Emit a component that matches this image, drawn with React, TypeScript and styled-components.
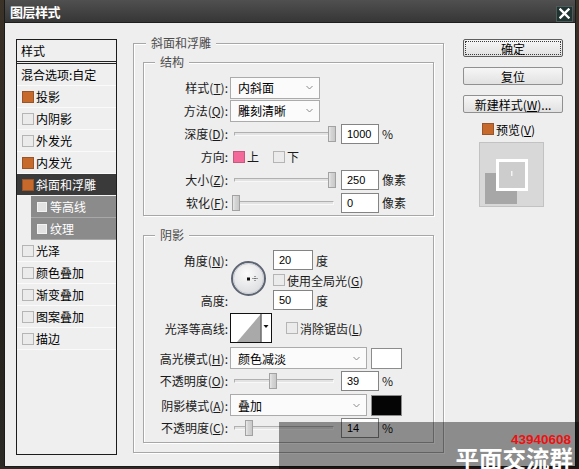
import React from "react";
import styled, { createGlobalStyle } from "styled-components";

const GlobalStyle = createGlobalStyle`
  html, body {
    margin: 0;
    padding: 0;
  }
  body {
    background: #2a2520;
    font-family: "Noto Sans CJK SC", "Liberation Sans", sans-serif;
    font-size: 12px;
    color: #111;
  }
`;

type CheckKind = "off" | "on" | "pink" | "sub";

const checkColors: Record<CheckKind, [string, string]> = {
  off: ["#b5b5b5", "#ebebeb"],
  on: ["#98552b", "#c8692c"],
  pink: ["#c8587f", "#f2699a"],
  sub: ["#f2f2f2", "#e2e2e2"],
};

const listItems = [
  { text: "投影", on: true },
  { text: "内阴影" },
  { text: "外发光" },
  { text: "内发光", on: true },
  { text: "斜面和浮雕", on: true, active: true },
  { text: "等高线", sub: true },
  { text: "纹理", sub: true },
  { text: "光泽" },
  { text: "颜色叠加" },
  { text: "渐变叠加" },
  { text: "图案叠加" },
  { text: "描边" },
];

const Chevron = () => (
  <svg width="7" height="5" viewBox="0 0 7 5">
    <path d="M0.5 1 L3.5 4 L6.5 1" fill="none" stroke="#8a8a8a" strokeWidth="1" />
  </svg>
);

const Select = ({ width, value }: { width: number; value: string }) => (
  <SelectBox $w={width}>
    <span>{value}</span>
    <Chevron />
  </SelectBox>
);

const Slider = ({ frac }: { frac: number }) => (
  <SliderWrap>
    <Track />
    <Thumb style={{ left: 2 + Math.round(frac * 96) }} />
  </SliderWrap>
);

const Dial = () => (
  <svg width="37" height="37" viewBox="0 0 37 37">
    <defs>
      <radialGradient id="dialFill" cx="0.45" cy="0.35" r="0.7">
        <stop offset="0" stopColor="#fbfbfb" />
        <stop offset="1" stopColor="#d9dadd" />
      </radialGradient>
    </defs>
    <circle cx="18.5" cy="18.5" r="16.5" fill="url(#dialFill)" stroke="#5d6472" strokeWidth="2" />
    <circle cx="18.5" cy="18.5" r="15" fill="none" stroke="#c9ccd2" strokeWidth="1" />
    <rect x="17" y="17.5" width="3" height="3" fill="#111" />
    <path d="M25 16v5M22.5 18.5h5" stroke="#333" strokeWidth="0.9" strokeDasharray="1 1" />
  </svg>
);

const Contour = () => (
  <svg width="42" height="30" viewBox="0 0 42 30">
    <rect x="0.5" y="0.5" width="41" height="29" fill="#fff" stroke="#111" />
    <polygon points="7,29 30.5,1.5 30.5,29" fill="#a9a9a9" />
    <line x1="31" y1="1" x2="31" y2="29" stroke="#222" />
    <polygon points="33.5,12 38.5,12 36,15" fill="#111" />
  </svg>
);

const Preview = () => (
  <svg width="65" height="65" viewBox="0 0 65 65">
    <rect x="0.5" y="0.5" width="64" height="64" fill="#d8d8d8" stroke="#c2c2c2" />
    <rect x="6" y="31" width="32" height="31" fill="#a7a7a7" />
    <rect x="18.5" y="18.5" width="29" height="29" fill="#cdcdcd" stroke="#ffffff" strokeWidth="3" />
    <rect x="32" y="29" width="1.5" height="5" fill="#f4f4f4" />
  </svg>
);

const CloseIcon = () => (
  <svg width="11" height="11" viewBox="0 0 11 11">
    <path d="M1.5 1.5 L9.5 9.5 M9.5 1.5 L1.5 9.5" stroke="#fff" strokeWidth="2.4" strokeLinecap="square" />
  </svg>
);

export default function App() {
  return (
    <Stage>
      <GlobalStyle />
      <Window>
        <TitleBar>
          <Title>图层样式</Title>
          <CloseButton>
            <CloseIcon />
          </CloseButton>
        </TitleBar>

        <Body>
          <List>
            <ListHeader>样式</ListHeader>
            <ListDivider />
            <BlendRow>混合选项:自定</BlendRow>
            {listItems.map((it) => (
              <Item key={it.text} $active={it.active} $sub={it.sub}>
                <Check $kind={it.sub ? "sub" : it.on ? "on" : "off"} />
                {it.text}
              </Item>
            ))}
          </List>

          <Main>
            <Group $pad={9} $pb={9}>
              <Legend $offset={3}>斜面和浮雕</Legend>

              <Group $pad={0} $pb={1} $mt={11}>
                <Legend $offset={11}>结构</Legend>
                <Row $mt={6}>
                  <Label>样式(<u>T</u>):</Label>
                  <Select width={90} value="内斜面" />
                </Row>
                <Row>
                  <Label>方法(<u>Q</u>):</Label>
                  <Select width={90} value="雕刻清晰" />
                </Row>
                <Row>
                  <Label>深度(<u>D</u>):</Label>
                  <Slider frac={1} />
                  <NumBox>1000</NumBox>
                  <Unit>%</Unit>
                </Row>
                <Row>
                  <Label>方向:</Label>
                  <Check $kind="pink" style={{ marginLeft: 3 }} />
                  <Unit $ml={2}>上</Unit>
                  <Check $kind="off" style={{ marginLeft: 14 }} />
                  <Unit $ml={2}>下</Unit>
                </Row>
                <Row>
                  <Label>大小(<u>Z</u>):</Label>
                  <Slider frac={1} />
                  <NumBox>250</NumBox>
                  <Unit>像素</Unit>
                </Row>
                <Row>
                  <Label>软化(<u>F</u>):</Label>
                  <Slider frac={0} />
                  <NumBox>0</NumBox>
                  <Unit>像素</Unit>
                </Row>
              </Group>

              <Group $pad={0} $pb={3} $mt={19}>
                <Legend $offset={11}>阴影</Legend>
                <AngleGrid>
                  <Label style={{ gridRow: 1, gridColumn: 1 }}>角度(<u>N</u>):</Label>
                  <DialCell>
                    <Dial />
                  </DialCell>
                  <Cell style={{ gridRow: 1 }}>
                    <NumBox $w={40} $ml={0}>20</NumBox>
                    <Unit>度</Unit>
                  </Cell>
                  <Cell style={{ gridRow: 2 }}>
                    <Check $kind="off" />
                    <Unit $ml={2}>使用全局光(<u>G</u>)</Unit>
                  </Cell>
                  <Label style={{ gridRow: 3, gridColumn: 1 }}>高度:</Label>
                  <Cell style={{ gridRow: 3 }}>
                    <NumBox $w={40} $ml={0}>50</NumBox>
                    <Unit>度</Unit>
                  </Cell>
                </AngleGrid>
                <Row $h={30} $mt={3}>
                  <Label>光泽等高线:</Label>
                  <Contour />
                  <Check $kind="off" style={{ marginLeft: 14 }} />
                  <Unit $ml={2}>消除锯齿(<u>L</u>)</Unit>
                </Row>
                <Row $h={22} $mt={4}>
                  <Label>高光模式(<u>H</u>):</Label>
                  <Select width={137} value="颜色减淡" />
                  <Swatch $color="#ffffff" />
                </Row>
                <Row>
                  <Label>不透明度(<u>O</u>):</Label>
                  <Slider frac={0.39} />
                  <NumBox>39</NumBox>
                  <Unit>%</Unit>
                </Row>
                <Row $h={22} $mt={2}>
                  <Label>阴影模式(<u>A</u>):</Label>
                  <Select width={137} value="叠加" />
                  <Swatch $color="#050505" />
                </Row>
                <Row>
                  <Label>不透明度(<u>C</u>):</Label>
                  <Slider frac={0.14} />
                  <NumBox>14</NumBox>
                  <Unit>%</Unit>
                </Row>
              </Group>
            </Group>
          </Main>

          <Side>
            <Button $default>确定</Button>
            <Button>复位</Button>
            <Button>
              新建样式(<u>W</u>)...
            </Button>
            <PreviewToggle>
              <Check $kind="on" />
              <span>
                预览(<u>V</u>)
              </span>
            </PreviewToggle>
            <PreviewFrame>
              <Preview />
            </PreviewFrame>
          </Side>
        </Body>
      </Window>

      <Watermark>
        <WaterNumber>43940608</WaterNumber>
        <WaterText>平面交流群</WaterText>
      </Watermark>
    </Stage>
  );
}

const Stage = styled.div`
  position: relative;
  width: 579px;
  height: 469px;
  overflow: hidden;
  background: linear-gradient(180deg, #3b3228, #24201b 60%, #2c2a24);
`;

const Window = styled.div`
  margin-left: 4px;
  width: 572px;
  height: 467px;
  box-sizing: border-box;
  border: 1px solid #1a1a1a;
  border-top: 0;
  background: #eeeeee;
  display: flex;
  flex-direction: column;
`;

const TitleBar = styled.div`
  height: 22px;
  flex-shrink: 0;
  border-bottom: 1px solid #1e1e1e;
  background: linear-gradient(180deg, #505050, #363636);
  display: flex;
  align-items: center;
  justify-content: space-between;
  padding: 0 2px 0 5px;
`;

const Title = styled.div`
  color: #ffffff;
  font-weight: bold;
  font-size: 13px;
  letter-spacing: -0.5px;
`;

const CloseButton = styled.div`
  width: 17px;
  height: 16px;
  margin-top: 5px;
  box-sizing: border-box;
  border: 1px solid #4d5a58;
  background: #203432;
  display: flex;
  align-items: center;
  justify-content: center;
`;

const Body = styled.div`
  flex: 1;
  display: flex;
  align-items: flex-start;
  padding: 16px 0 0 11px;
`;

const List = styled.div`
  width: 101px;
  height: 416px;
  flex-shrink: 0;
  box-sizing: border-box;
  border: 1px solid #1c1c1c;
  background: #efefef;
  display: flex;
  flex-direction: column;
  color: #000;
`;

const ListHeader = styled.div`
  height: 21px;
  line-height: 21px;
  padding-left: 4px;
  border-bottom: 1px solid #222;
`;

const ListDivider = styled.div`
  height: 1px;
  margin-top: 1px;
  background: #222;
`;

const BlendRow = styled.div`
  height: 22px;
  line-height: 21px;
  box-sizing: border-box;
  padding-left: 4px;
  border-bottom: 1px solid #fafafa;
`;

const Item = styled.div<{ $active?: boolean; $sub?: boolean }>`
  display: flex;
  align-items: center;
  gap: ${(p) => (p.$sub ? 3 : 2)}px;
  height: 22px;
  box-sizing: border-box;
  margin-left: ${(p) => (p.$sub ? 14 : 0)}px;
  padding-left: ${(p) => (p.$sub ? 6 : 5)}px;
  border-bottom: 1px solid ${(p) => (p.$sub ? "#a8a8a8" : p.$active ? "#f4f4f4" : "#fafafa")};
  background: ${(p) => (p.$active ? "#3a3a3a" : p.$sub ? "#8b8b8b" : "transparent")};
  color: ${(p) => (p.$active || p.$sub ? "#ffffff" : "#000000")};
`;

const Check = styled.span<{ $kind: CheckKind }>`
  display: inline-block;
  flex-shrink: 0;
  width: ${(p) => (p.$kind === "sub" ? 10 : 12)}px;
  height: ${(p) => (p.$kind === "sub" ? 10 : 12)}px;
  box-sizing: border-box;
  border: 1px solid ${(p) => checkColors[p.$kind][0]};
  background: ${(p) => checkColors[p.$kind][1]};
`;

const Main = styled.div`
  width: 311px;
  flex-shrink: 0;
  margin: 4px 0 0 16px;
`;

const Group = styled.div<{ $pad: number; $pb: number; $mt?: number }>`
  box-sizing: border-box;
  margin-top: ${(p) => p.$mt ?? 0}px;
  padding: 0 ${(p) => p.$pad}px ${(p) => p.$pb}px;
  border: 1px solid #a7a7a7;
  box-shadow: inset 1px 1px 0 #ffffff, 1px 1px 0 #ffffff;
`;

const Legend = styled.div<{ $offset: number }>`
  width: fit-content;
  height: 16px;
  line-height: 16px;
  margin: -9px 0 0 ${(p) => p.$offset}px;
  padding: 0 5px;
  background: #eeeeee;
  color: #4c4c4c;
`;

const Row = styled.div<{ $h?: number; $mt?: number }>`
  display: flex;
  align-items: center;
  height: ${(p) => p.$h ?? 23}px;
  margin-top: ${(p) => p.$mt ?? 0}px;
`;

const Label = styled.div`
  width: 84px;
  margin-right: 2px;
  flex-shrink: 0;
  text-align: right;
  white-space: nowrap;
  color: #1a1a1a;
`;

const SelectBox = styled.div<{ $w: number }>`
  width: ${(p) => p.$w}px;
  height: 22px;
  flex-shrink: 0;
  box-sizing: border-box;
  border: 1px solid #ababab;
  background: #fbfbfb;
  display: flex;
  align-items: center;
  justify-content: space-between;
  padding: 0 6px 0 7px;
  color: #000;
`;

const SliderWrap = styled.div`
  position: relative;
  width: 108px;
  height: 18px;
  flex-shrink: 0;
  box-sizing: border-box;
  padding: 0 4px;
  display: flex;
  align-items: center;
`;

const Track = styled.div`
  flex: 1;
  height: 4px;
  box-sizing: border-box;
  border: 1px solid #b0b0b0;
  border-right-color: #f8f8f8;
  border-bottom-color: #f8f8f8;
  background: #e3e3e3;
`;

const Thumb = styled.div`
  position: absolute;
  top: 1px;
  width: 8px;
  height: 16px;
  box-sizing: border-box;
  border: 1px solid #a2a2a2;
  background: linear-gradient(90deg, #e8e8e8 0, #d2d2d2 45%, #bdbdbd 50%, #d2d2d2 55%, #c8c8c8 100%);
`;

const NumBox = styled.div<{ $w?: number; $ml?: number }>`
  width: ${(p) => p.$w ?? 38}px;
  height: 20px;
  flex-shrink: 0;
  box-sizing: border-box;
  margin-left: ${(p) => p.$ml ?? 3}px;
  padding-left: 5px;
  border: 1px solid #848484;
  background: #ffffff;
  display: flex;
  align-items: center;
  font-family: "Liberation Sans", Arial, sans-serif;
  font-size: 11px;
  color: #000;
`;

const Unit = styled.span<{ $ml?: number }>`
  margin-left: ${(p) => p.$ml ?? 3}px;
  white-space: nowrap;
  color: #1a1a1a;
`;

const AngleGrid = styled.div`
  display: grid;
  grid-template-columns: 84px 41px auto;
  grid-template-rows: repeat(3, 20px);
  column-gap: 2px;
  margin-top: 7px;
  align-items: center;
`;

const DialCell = styled.div`
  grid-column: 2;
  grid-row: 1 / 4;
  display: flex;
  align-items: center;
  margin-top: -4px;
`;

const Cell = styled.div`
  grid-column: 3;
  display: flex;
  align-items: center;
`;

const Swatch = styled.div<{ $color: string }>`
  width: 31px;
  height: 21px;
  margin-left: 4px;
  box-sizing: border-box;
  border: 1px solid #8c8c8c;
  background: ${(p) => p.$color};
`;

const Side = styled.div`
  width: 100px;
  flex-shrink: 0;
  margin-left: 19px;
  display: flex;
  flex-direction: column;
`;

const Button = styled.div<{ $default?: boolean }>`
  height: 18px;
  margin-bottom: 10px;
  box-sizing: border-box;
  border: 1px solid ${(p) => (p.$default ? "#5e5e5e" : "#909090")};
  border-radius: 2px;
  background: linear-gradient(180deg, #f6f6f6, #e1e1e1);
  display: flex;
  align-items: center;
  justify-content: center;
  color: #000;
  outline: ${(p) => (p.$default ? "1px dotted #3a3a3a" : "none")};
  outline-offset: -3px;
`;

const PreviewToggle = styled.div`
  height: 16px;
  margin-top: -2px;
  padding-left: 19px;
  display: flex;
  align-items: center;
  gap: 2px;
  color: #000;
`;

const PreviewFrame = styled.div`
  margin: 5px 0 0 16px;
  line-height: 0;
`;

const Watermark = styled.div`
  position: absolute;
  left: 279px;
  top: 422px;
  right: 0;
  bottom: 0;
  background: rgba(0, 0, 0, 0.41);
  display: flex;
  flex-direction: column;
  align-items: flex-end;
  padding: 11px 6px 0 0;
`;

const WaterNumber = styled.div`
  margin-right: 2px;
  font-family: "Liberation Sans", Arial, sans-serif;
  font-weight: bold;
  font-size: 13.5px;
  line-height: 14px;
  color: #ee1111;
`;

const WaterText = styled.div`
  font-family: "Noto Sans CJK SC", sans-serif;
  font-weight: bold;
  font-size: 23.5px;
  line-height: 22px;
  color: #ffffff;
  white-space: nowrap;
`;
